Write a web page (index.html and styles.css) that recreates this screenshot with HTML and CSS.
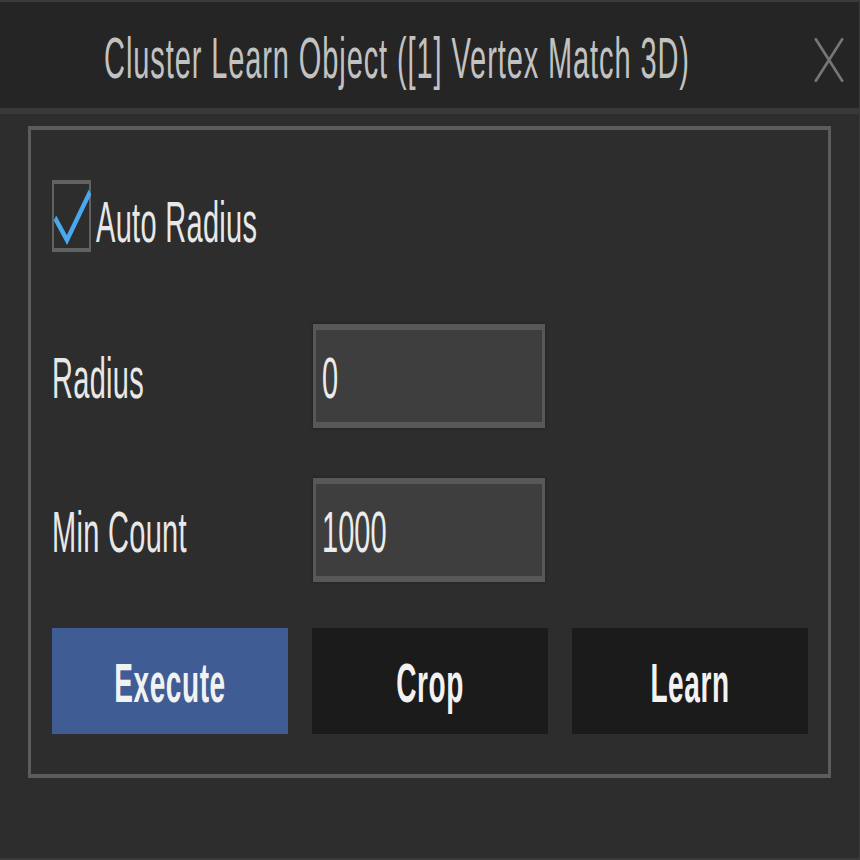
FILE: index.html
```html
<html lang="en">
<head>
<meta charset="utf-8"/>
<title>Cluster Learn Object</title>
<link rel="stylesheet" href="styles.css">
</head>
<body>

<div class="window">
  <div class="titlebar">
    <div class="title">Cluster Learn Object ([1] Vertex Match 3D)</div>
    <div class="close">
      <svg width="30" height="22" viewBox="0 0 30 22">
        <line x1="1" y1="0" x2="29" y2="22" stroke="#767676" stroke-width="2"/>
        <line x1="29" y1="0" x2="1" y2="22" stroke="#767676" stroke-width="2"/>
      </svg>
    </div>
  </div>

  <div class="content">
    <fieldset class="group">
      <label class="check-row">
        <span class="checkbox">
          <svg width="40" height="36" viewBox="0 0 40 36">
            <polyline points="3,19 15,30 38,6" fill="none" stroke="#4aa8ee" stroke-width="3.5"/>
          </svg>
        </span>
        <span>Auto Radius</span>
      </label>

      <div class="form">
        <label for="radius">Radius</label>
        <input type="text" id="radius" value="0">
        <label for="mincount">Min Count</label>
        <input type="text" id="mincount" value="1000">
      </div>

      <div class="buttons">
        <button class="primary">Execute</button>
        <button>Crop</button>
        <button>Learn</button>
      </div>
    </fieldset>
  </div>
</div>

</body>
</html>
```

FILE: styles.css
```css
html, body {
  margin: 0;
  height: 860px;
  overflow: hidden;
  background: #2d2d2d;
}
body {
  font: 29px "Liberation Sans", Arial, sans-serif;
  letter-spacing: 0.3px;
  color: #e8e8e8;
}
/* the dialog is laid out at half height and stretched */
.window {
  box-sizing: border-box;
  width: 860px;
  height: 430px;
  border: 1px solid #3a3a3a;
  border-left: none;
  background: #2d2d2d;
  transform: scaleY(2);
  transform-origin: 0 0;
}
.titlebar {
  display: flex;
  align-items: center;
  height: 53px;
  background: #252525;
  border-bottom: 3px solid #383838;
}
.title {
  flex: 1;
  text-align: center;
  color: #c2c2c2;
  letter-spacing: 0.9px;
  padding-top: 4px;
}
.close {
  width: 65px;
  padding-left: 20px;
  padding-top: 4px;
  box-sizing: border-box;
}
.close svg {
  display: block;
}
.content {
  padding: 6px 30px 0 28px;
}
.group {
  margin: 0;
  box-sizing: border-box;
  height: 326px;
  border-style: solid;
  border-color: #5c5c5c;
  border-width: 2px 3px;
  padding: 25px 20px 0 21px;
}
.check-row {
  display: flex;
  align-items: center;
  gap: 5px;
  height: 36px;
}
.checkbox {
  box-sizing: border-box;
  width: 39px;
  height: 36px;
  border: 2px solid #626262;
  position: relative;
}
.checkbox svg {
  position: absolute;
  left: -2px;
  top: -2px;
}
.check-row span:last-child {
  padding-top: 6px;
}
.form {
  display: grid;
  grid-template-columns: 261px 232px;
  row-gap: 25px;
  align-items: center;
  margin-top: 36px;
}
.form label {
  padding-top: 2px;
}
.form input {
  box-sizing: border-box;
  height: 52px;
  width: 232px;
  margin: 0;
  padding: 3px 0 0 6px;
  font: inherit;
  color: #ececec;
  background: #3e3e3e;
  border: 3px solid #585858;
  box-shadow: 0 0 2px #1e1e1e;
  outline: none;
}
.buttons {
  display: flex;
  gap: 24px;
  margin-top: 23px;
}
.buttons button {
  width: 236px;
  height: 53px;
  margin: 0;
  border: none;
  background: #1b1b1b;
  color: #f2f2f2;
  font: bold 28px "Liberation Sans", Arial, sans-serif;
  letter-spacing: 0.6px;
  padding-top: 3px;
}
.buttons .primary {
  background: #3f5d94;
}
```
